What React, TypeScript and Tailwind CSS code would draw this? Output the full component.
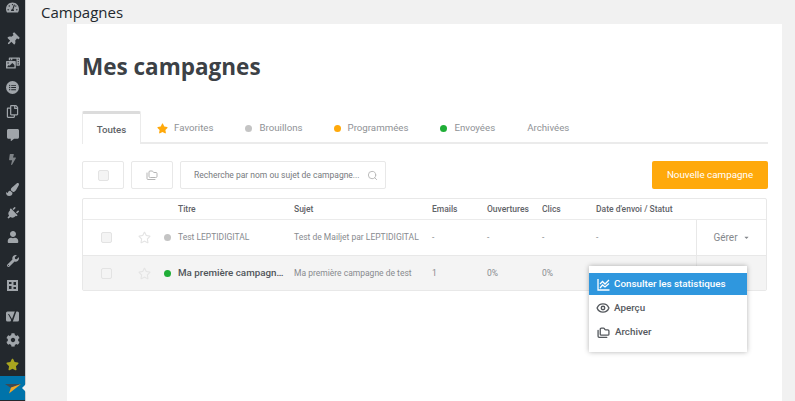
import React from "react";
import { FaTachometerAlt, FaThumbtack, FaPhotoVideo, FaCommentAlt, FaBolt, FaPaintBrush, FaPlug, FaUser, FaWrench, FaCog, FaStar, FaRegStar, FaRegCopy, FaCaretDown, FaListUl } from "react-icons/fa";
import { LuFolders, LuSearch, LuEye } from "react-icons/lu";

function SideIcon({ children }: { children: React.ReactNode }) {
  return <div className="h-6 flex items-center justify-center text-[#a0a5aa] text-[14px]">{children}</div>;
}

function Sidebar() {
  return (
    <div className="w-[26px] shrink-0 bg-[#23282d] border-r border-[#c9cbcd] flex flex-col">
      <div className="h-[14px] flex items-center justify-center text-[#a0a5aa] text-[13px]"><FaTachometerAlt /></div>
      <div className="h-[13px]" />
      <SideIcon><FaThumbtack className="rotate-45 text-[13px]" /></SideIcon>
      <SideIcon><FaPhotoVideo /></SideIcon>
      <SideIcon>
        <span className="w-[13px] h-[13px] rounded-full bg-[#a0a5aa] flex items-center justify-center text-[#23282d] text-[7px]"><FaListUl /></span>
      </SideIcon>
      <SideIcon><FaRegCopy className="text-[13px]" /></SideIcon>
      <SideIcon><FaCommentAlt className="text-[12px]" /></SideIcon>
      <SideIcon><FaBolt className="text-[11px] text-[#7d8286]" /></SideIcon>
      <div className="h-[6px]" />
      <SideIcon><FaPaintBrush className="text-[13px]" /></SideIcon>
      <SideIcon><FaPlug className="rotate-45 text-[13px]" /></SideIcon>
      <SideIcon><FaUser className="text-[12px]" /></SideIcon>
      <SideIcon><FaWrench className="text-[12px]" /></SideIcon>
      <SideIcon>
        <svg width="11" height="11" viewBox="0 0 11 11">
          <rect width="11" height="11" fill="#a0a5aa" />
          <rect x="2" y="2" width="2.5" height="2" fill="#23282d" />
          <rect x="2" y="6" width="2.5" height="3" fill="#23282d" />
          <rect x="6.5" y="2" width="2.5" height="3" fill="#23282d" />
          <rect x="6.5" y="7" width="2.5" height="2" fill="#23282d" />
        </svg>
      </SideIcon>
      <div className="h-[7px]" />
      <SideIcon>
        <svg width="13" height="14" viewBox="0 0 13 14">
          <rect x="0" y="2.5" width="13" height="10" rx="1.5" fill="#a0a5aa" />
          <path d="M3 5 L6 10 L9.5 0.5 L11 0.5 L6.5 13.5 L4 13.5 L5.2 11 L2 5 Z" fill="#23282d" />
        </svg>
      </SideIcon>
      <SideIcon><FaCog className="text-[14px]" /></SideIcon>
      <div className="h-6 flex items-center justify-center text-[#a9a51f] text-[13px]"><FaStar /></div>
      <div className="h-6 bg-[#0073aa] relative flex items-center justify-center">
        <svg width="16" height="11" viewBox="0 0 16 11">
          <path d="M0 1 L16 1 L6 5 Z" fill="#3f4a52" />
          <path d="M16 1 L6 4.5 L4 10.5 Z" fill="#f5a623" />
        </svg>
        <span className="absolute right-[-1px] top-[8px] w-0 h-0 border-y-[4px] border-y-transparent border-r-[4px] border-r-[#f1f1f1]" />
      </div>
    </div>
  );
}

const Dot = ({ color }: { color: string }) => <span className={`w-[7px] h-[7px] rounded-full ${color}`} />;

function Tabs() {
  return (
    <div className="flex h-[33px] border-b-2 border-[#ebebeb] mt-[29px] text-[9.7px] text-[#8f9296]">
      <div className="w-[59px] h-[33px] border-x border-[#ebebeb] border-t-[3px] border-t-[#dcdcdc] rounded-t-[2px] bg-white flex items-center justify-center text-[#5f6368] font-medium pt-[2px]">
        Toutes
      </div>
      <div className="flex items-center gap-[6px] ml-[16px] pt-[3px]"><FaStar className="text-[#ffa90b] text-[11px]" />Favorites</div>
      <div className="flex items-center gap-[7px] ml-[32px] pt-[3px]"><Dot color="bg-[#c4c4c4]" />Brouillons</div>
      <div className="flex items-center gap-[7px] ml-[31px] pt-[3px]"><Dot color="bg-[#ffa90b]" />Programmées</div>
      <div className="flex items-center gap-[7px] ml-[32px] pt-[3px]"><Dot color="bg-[#1fae37]" />Envoyées</div>
      <div className="flex items-center ml-[32px] pt-[3px]">Archivées</div>
    </div>
  );
}

function Box({ children, w }: { children: React.ReactNode; w: string }) {
  return <div className={`${w} h-[28px] border border-[#e8e8e8] rounded-[2px] flex items-center justify-center`}>{children}</div>;
}

function Check() {
  return <span className="block w-[11px] h-[11px] border border-[#e3e3e3] bg-[#f4f4f4] rounded-[2px]" />;
}

const cols = "grid grid-cols-[95px_116px_138px_55px_55px_54px_100px_1fr]";

function Toolbar() {
  return (
    <div className="flex mt-[17px] gap-[7px]">
      <Box w="w-[42px]"><Check /></Box>
      <Box w="w-[42px]"><LuFolders className="text-[#b5b5b5] text-[12px]" /></Box>
      <div className="w-[206px] h-[28px] border border-[#e8e8e8] rounded-[2px] flex items-center pl-[13px] pr-[7px] justify-between text-[8.5px] text-[#777a7e]">
        <span className="whitespace-nowrap">Recherche par nom ou sujet de campagne...</span>
        <LuSearch className="text-[#b5b5b5] text-[11px]" />
      </div>
      <div className="ml-auto w-[116px] h-[28px] bg-[#ffa90b] rounded-[2px] flex items-center justify-center text-white text-[9.8px]">
        Nouvelle campagne
      </div>
    </div>
  );
}

function Lead({ dot }: { dot: string }) {
  return (
    <div className="flex items-center pl-[18px] text-[#e4e4e4]">
      <Check />
      <span className="ml-[26px] text-[13px]"><FaRegStar /></span>
      <span className="ml-[13px] flex items-center"><Dot color={dot} /></span>
    </div>
  );
}

function Table() {
  return (
    <div className="mt-[9px] mr-px border border-[#e8e8e8] rounded-[2px] text-[8.5px] text-[#888b8f]">
      <div className={`${cols} h-[21px] items-center text-[#5f6368] font-medium border-b border-[#ebebeb]`}>
        <span />
        <span>Titre</span>
        <span>Sujet</span>
        <span>Emails</span>
        <span>Ouvertures</span>
        <span>Clics</span>
        <span className="col-span-2">Date d'envoi / Statut</span>
      </div>
      <div className={`${cols} h-[36px] items-center border-b border-[#e8e8e8]`}>
        <Lead dot="bg-[#c4c4c4]" />
        <span>Test LEPTIDIGITAL</span>
        <span>Test de Mailjet par LEPTIDIGITAL</span>
        <span>-</span>
        <span>-</span>
        <span>-</span>
        <span>-</span>
        <div className="h-full border-l border-[#e8e8e8] flex items-center justify-center gap-[5px] text-[10px] text-[#85888c] whitespace-nowrap">
          Gérer <FaCaretDown className="text-[7px]" />
        </div>
      </div>
      <div className={`${cols} h-[34px] items-center bg-[#f4f4f4]`}>
        <Lead dot="bg-[#1fae37]" />
        <span className="text-[9.8px] text-[#50545a] font-medium truncate pr-[6px]">Ma première campagne de test</span>
        <span className="text-[#888b8f]">Ma première campagne de test</span>
        <span>1</span>
        <span>0%</span>
        <span>0%</span>
        <span />
        <div className="h-full border-l border-[#e8e8e8]" />
      </div>
    </div>
  );
}

function Menu() {
  return (
    <div className="absolute left-[507px] top-[68px] w-[158px] h-[86px] pt-[7px] bg-white shadow-[0_0_5px_rgba(0,0,0,0.3)] text-[9.8px] text-[#55595e] font-medium">
      <div className="h-[22px] bg-[#2f97de] text-white flex items-center pl-[8px] gap-[4px]">
        <svg width="13" height="13" viewBox="0 0 13 13" fill="none" stroke="currentColor" strokeWidth="1.3">
          <path d="M1 1 V12 H12.5" />
          <path d="M3 6 L5.5 3.5 L8 6 L12 2" />
          <path d="M3 10 L5.5 7 L8 9 L12 5.5" />
        </svg>
        Consulter les statistiques
      </div>
      <div className="h-[24px] mt-px flex items-center pl-[7px] gap-[4px]"><LuEye className="text-[14px]" strokeWidth={2.4} /> Aperçu</div>
      <div className="h-[24px] flex items-center pl-[8px] gap-[5px]"><LuFolders className="text-[13px]" strokeWidth={2.4} /> Archiver</div>
    </div>
  );
}

export default function App() {
  return (
    <div className="w-[795px] h-[401px] overflow-hidden flex bg-[#f1f1f1] font-['Roboto',sans-serif]">
      <Sidebar />
      <div className="flex-1 flex flex-col">
        <div className="h-[24px] pl-[15px] text-[15px] leading-[24px] text-[#23282d] font-['Open_Sans',sans-serif]">Campagnes</div>
        <div className="ml-[41px] w-[715px] flex-1 bg-white pl-[15px] pr-[14px] pt-[28px]">
          <h1 className="text-[22.5px] leading-[30px] font-bold text-[#3c4146] font-['Open_Sans',sans-serif]">Mes campagnes</h1>
          <Tabs />
          <Toolbar />
          <div className="relative">
            <Table />
            <Menu />
          </div>
        </div>
      </div>
    </div>
  );
}
